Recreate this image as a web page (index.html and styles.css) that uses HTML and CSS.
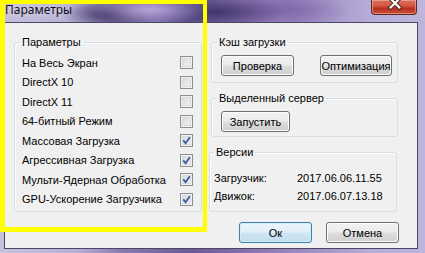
FILE: index.html
```html
<!DOCTYPE html>
<html lang="ru">
<head>
<meta charset="utf-8">
<title>Параметры</title>
<link rel="stylesheet" href="styles.css">
</head>
<body>
<div class="window">
  <div class="titlebar">
    <span class="title">Параметры</span>
    <div class="close">
      <svg width="46" height="15" viewBox="0 0 46 15">
        <path d="M20 -1.5 L29 7.5 M29 -1.5 L20 7.5" stroke="#4a2a28" stroke-width="4.2" stroke-linecap="square" fill="none"/>
        <path d="M20 -1.5 L29 7.5 M29 -1.5 L20 7.5" stroke="#ffffff" stroke-width="2.2" stroke-linecap="square" fill="none"/>
      </svg>
    </div>
  </div>
  <div class="client">
    <fieldset class="group params">
      <legend>Параметры</legend>
      <div class="row"><span>На Весь Экран</span><span class="cb"></span></div>
      <div class="row"><span>DirectX 10</span><span class="cb"></span></div>
      <div class="row"><span>DirectX 11</span><span class="cb"></span></div>
      <div class="row"><span>64-битный Режим</span><span class="cb"></span></div>
      <div class="row"><span>Массовая Загрузка</span><span class="cb checked"><svg width="11" height="11" viewBox="0 0 11 11"><path d="M2.3 5.4 L4.6 8.2 L8.8 2.2" stroke="#3d5a9e" stroke-width="1.8" fill="none"/></svg></span></div>
      <div class="row"><span>Агрессивная Загрузка</span><span class="cb checked"><svg width="11" height="11" viewBox="0 0 11 11"><path d="M2.3 5.4 L4.6 8.2 L8.8 2.2" stroke="#3d5a9e" stroke-width="1.8" fill="none"/></svg></span></div>
      <div class="row"><span>Мульти-Ядерная Обработка</span><span class="cb checked"><svg width="11" height="11" viewBox="0 0 11 11"><path d="M2.3 5.4 L4.6 8.2 L8.8 2.2" stroke="#3d5a9e" stroke-width="1.8" fill="none"/></svg></span></div>
      <div class="row"><span>GPU-Ускорение Загрузчика</span><span class="cb checked"><svg width="11" height="11" viewBox="0 0 11 11"><path d="M2.3 5.4 L4.6 8.2 L8.8 2.2" stroke="#3d5a9e" stroke-width="1.8" fill="none"/></svg></span></div>
    </fieldset>
    <div class="side">
      <fieldset class="group cache">
        <legend>Кэш загрузки</legend>
        <div class="btnrow">
          <button class="btn w73">Проверка</button>
          <button class="btn w72">Оптимизация</button>
        </div>
      </fieldset>
      <fieldset class="group server">
        <legend>Выделенный сервер</legend>
        <div class="btnrow">
          <button class="btn w69">Запустить</button>
        </div>
      </fieldset>
      <fieldset class="group versions">
        <legend>Версии</legend>
        <div class="vgrid">
          <span>Загрузчик:</span><span>2017.06.06.11.55</span>
          <span>Движок:</span><span>2017.06.07.13.18</span>
        </div>
      </fieldset>
      <div class="actions">
        <button class="btn w73 default">Ок</button>
        <button class="btn w73">Отмена</button>
      </div>
    </div>
  </div>
  <div class="highlight"></div>
</div>
</body>
</html>
```
FILE: styles.css
```css
html, body {
  margin: 0;
  padding: 0;
  overflow: hidden;
}

.window {
  position: relative;
  width: 425px;
  height: 253px;
  display: flex;
  flex-direction: column;
  background:
    radial-gradient(ellipse 60px 14px at 150px 10px, rgba(190, 170, 225, 0.9), rgba(190, 170, 225, 0) 100%),
    radial-gradient(ellipse 50px 16px at 110px 14px, rgba(50, 40, 90, 0.9), rgba(50, 40, 90, 0) 100%),
    radial-gradient(ellipse 70px 16px at 215px 12px, rgba(55, 45, 100, 0.85), rgba(55, 45, 100, 0) 100%),
    radial-gradient(ellipse 60px 18px at 290px 10px, rgba(120, 90, 160, 0.7), rgba(120, 90, 160, 0) 100%),
    linear-gradient(90deg, #c7c1de 0%, #b8b0d6 18%, #8a7cb0 28%, #6a5a95 45%, #8c74b0 60%, #a394c8 75%, #b7aed8 88%, #bdb5dc 100%);
}

.titlebar {
  height: 22px;
  display: flex;
  align-items: flex-start;
  flex: none;
}

.title {
  font-family: "Noto Sans", "Open Sans", sans-serif;
  font-size: 12px;
  line-height: 16px;
  color: #101018;
  padding: 2px 0 0 5px;
  text-shadow: 0 0 6px rgba(255, 255, 255, 0.7);
}

.close {
  margin-left: auto;
  margin-right: 8px;
  width: 46px;
  height: 15px;
  box-sizing: border-box;
  border: 1px solid #5e2a26;
  border-top: none;
  border-radius: 0 0 4px 4px;
  background: linear-gradient(180deg, #d9705e 0%, #d35844 40%, #b8301f 60%, #c9503a 100%);
  box-shadow: inset 0 0 0 1px rgba(255, 210, 200, 0.45);
  display: flex;
  overflow: hidden;
}

.close svg {
  display: block;
  margin-left: -1px;
}

.client {
  flex: 1;
  margin: 0 7px 4px 4px;
  border: 1px solid #4a4666;
  background: #f0f0f0;
  display: flex;
  align-items: flex-start;
  gap: 9px;
  padding: 13px 0 0 9px;
  font-family: "Liberation Sans", Arial, sans-serif;
  font-size: 11px;
  color: #000;
}

.group {
  margin: 0;
  min-width: 0;
  border: 1px solid #d5dfe5;
  border-radius: 3px;
  box-shadow: inset 1px 1px 0 #fafcfd;
}

.group legend {
  padding: 0 2px;
  line-height: 13px;
  margin-left: -2px;
}

.params {
  width: 188px;
  box-sizing: border-box;
  padding: 4px 8px 2px 7px;
}

.row {
  height: 19.5px;
  display: flex;
  align-items: center;
  justify-content: space-between;
}

.cb {
  width: 13px;
  height: 13px;
  box-sizing: border-box;
  border: 1px solid #8e8f8f;
  background: linear-gradient(135deg, #cfd2d6 0%, #e6e7e9 50%, #f7f7f7 100%);
  box-shadow: inset 0 0 0 1px #f2f2f2, inset 0 0 0 2px #d8dadd;
  display: flex;
}

.cb svg {
  display: block;
}

.side {
  width: 188px;
  display: flex;
  flex-direction: column;
}

.cache {
  margin-right: 1px;
  padding: 6px 5px 6px 9px;
}

.cache legend,
.server legend {
  margin-left: -4px;
}

.server {
  margin: 9px 1px 0 0;
  padding: 6px 5px 4px 9px;
}

.versions {
  margin: 9px 2px 0 -2px;
  padding: 10px 4px 6px 4px;
}

.versions legend {
  margin-left: 0;
}

.btnrow {
  display: flex;
  gap: 26px;
}

.btn {
  height: 21px;
  box-sizing: border-box;
  padding: 0;
  font-family: "Liberation Sans", Arial, sans-serif;
  font-size: 11px;
  color: #000;
  border: 1px solid #707070;
  border-radius: 3px;
  background: linear-gradient(180deg, #f2f2f2 0%, #ebebeb 48%, #dddddd 52%, #cfcfcf 100%);
  box-shadow: inset 0 0 0 1px #fcfcfc;
}

.w73 { width: 73px; }
.w72 { width: 72px; }
.w69 { width: 69px; }

.btn.default {
  border-color: #3c7fb1;
  background: linear-gradient(180deg, #eaf5fb 0%, #e0eff8 48%, #cfe6f3 52%, #c2ddec 100%);
  box-shadow: inset 0 0 0 1px #d6ecf8;
}

.vgrid {
  display: grid;
  grid-template-columns: 83px auto;
  grid-auto-rows: 18px;
  align-items: center;
}

.actions {
  margin-top: 10px;
  display: flex;
  justify-content: flex-end;
  gap: 14px;
}

.highlight {
  position: absolute;
  left: 0;
  top: 0;
  width: 207px;
  height: 232px;
  box-sizing: border-box;
  border: 5px solid #ffff00;
  border-top-width: 4px;
  border-right-width: 4px;
  pointer-events: none;
}
```
